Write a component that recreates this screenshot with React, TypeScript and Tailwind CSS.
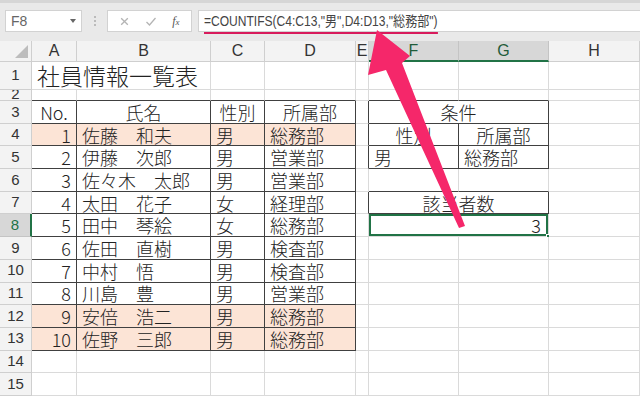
import React from "react"

const colLetters = ["A", "B", "C", "D", "E", "F", "G", "H"]

// rows 4..13 of the staff table
const staff: [string, string, string, string, boolean][] = [
  ["1", "佐藤　和夫", "男", "総務部", true],
  ["2", "伊藤　次郎", "男", "営業部", false],
  ["3", "佐々木　太郎", "男", "営業部", false],
  ["4", "太田　花子", "女", "経理部", false],
  ["5", "田中　琴絵", "女", "総務部", false],
  ["6", "佐田　直樹", "男", "検査部", false],
  ["7", "中村　悟", "男", "検査部", false],
  ["8", "川島　豊", "男", "営業部", false],
  ["9", "安倍　浩二", "男", "総務部", true],
  ["10", "佐野　三郎", "男", "総務部", true],
]

const dark = (r: number, c: number) =>
  (r >= 3 && r <= 13 && c >= 1 && c <= 4) ||
  (r >= 3 && r <= 5 && c >= 6 && c <= 7) ||
  (r === 7 && c >= 6 && c <= 7)

function borderClass(r: number, c: number, endCol = c) {
  const right = dark(r, endCol) || dark(r, endCol + 1)
  const bottom = dark(r, c) || dark(r + 1, c)
  if (right && bottom) return "border-r border-b border-r-[#404040] border-b-[#404040]"
  if (right) return "border-r border-b border-r-[#404040] border-b-[#dadada]"
  if (bottom) return "border-r border-b border-r-[#dadada] border-b-[#404040]"
  return "border-r border-b border-r-[#dadada] border-b-[#dadada]"
}

type CellDef = { text?: string; align?: string; span?: boolean; fill?: boolean; selected?: boolean; skip?: boolean; title?: boolean }

function cellAt(r: number, c: number): CellDef {
  if (r === 1 && c === 1) return { text: "社員情報一覧表", title: true }
  if (r === 3) {
    if (c === 1) return { text: "No.", align: "justify-center" }
    if (c === 2) return { text: "氏名", align: "justify-center" }
    if (c === 3) return { text: "性別", align: "justify-center" }
    if (c === 4) return { text: "所属部", align: "justify-center" }
    if (c === 6) return { text: "条件", align: "justify-center", span: true }
    if (c === 7) return { skip: true }
  }
  if (r >= 4 && r <= 13 && c >= 1 && c <= 4) {
    const p = staff[r - 4]
    if (c === 1) return { text: p[0], align: "justify-end pr-[5px]", fill: p[4] }
    return { text: p[c - 1], align: "justify-start pl-[5px]", fill: p[4] }
  }
  if (r === 4 && c === 6) return { text: "性別", align: "justify-center" }
  if (r === 4 && c === 7) return { text: "所属部", align: "justify-center" }
  if (r === 5 && c === 6) return { text: "男", align: "justify-start pl-[5px]" }
  if (r === 5 && c === 7) return { text: "総務部", align: "justify-start pl-[5px]" }
  if (r === 7 && c === 6) return { text: "該当者数", align: "justify-center", span: true }
  if (r === 7 && c === 7) return { skip: true }
  if (r === 8 && c === 6) return { text: "3", align: "justify-end pr-[7px]", span: true, selected: true }
  if (r === 8 && c === 7) return { skip: true }
  return {}
}

function FormulaBar() {
  return (
    <div className="h-[41px] bg-[#e9e9e9] border-t-[3px] border-[#d6d6d6] flex items-start pt-[7px] pl-[5px]">
      <div className="w-[77px] h-[22px] bg-white border border-[#d2d2d2] flex items-center justify-between px-[5px]">
        <span className="text-[14px] text-[#666] font-['Liberation_Sans',sans-serif]">F8</span>
        <span className="w-0 h-0 border-l-[3px] border-r-[3px] border-t-[4px] border-l-transparent border-r-transparent border-t-[#666]" />
      </div>
      <div className="w-[25px] h-[22px] flex flex-col items-center justify-center gap-[2px]">
        <span className="w-[2px] h-[2px] bg-[#bbb]" />
        <span className="w-[2px] h-[2px] bg-[#bbb]" />
        <span className="w-[2px] h-[2px] bg-[#bbb]" />
      </div>
      <div className="w-[85px] h-[22px] bg-white border border-[#d2d2d2] flex items-center justify-around px-[4px]">
        <svg width="11" height="11" viewBox="0 0 10 10" fill="none" stroke="#b4b4b4" strokeWidth="1.2">
          <path d="M2 2l6 6M8 2l-6 6" />
        </svg>
        <svg width="12" height="11" viewBox="0 0 12 10" fill="none" stroke="#b4b4b4" strokeWidth="1.3">
          <path d="M1.5 5.5l3 3L10.5 1.5" />
        </svg>
        <span className="text-[12px] italic text-[#555] font-['Liberation_Serif',serif]">
          f<span className="text-[9px]">x</span>
        </span>
      </div>
      <div className="flex-1 h-[22px] ml-[6px] bg-white border-y border-l border-[#d2d2d2] flex items-center pl-[5px]">
        <span className="relative inline-block origin-left scale-x-[0.86] whitespace-nowrap text-[14px] text-[#444] font-['Liberation_Sans','Noto_Sans_CJK_JP',sans-serif]">
          =COUNTIFS(C4:C13,"男",D4:D13,"総務部")
          <span className="absolute left-0 right-0 -bottom-[2px] h-[2px] bg-[#d81b5c]" />
        </span>
      </div>
    </div>
  )
}

export default function App() {
  const rows = Array.from({ length: 15 }, (_, i) => i + 1)
  return (
    <div className="relative w-[640px] h-[396px] overflow-hidden bg-white font-['Noto_Sans_CJK_JP',sans-serif]">
      <FormulaBar />
      <div className="grid grid-cols-[32px_45px_134px_54px_91px_13px_90px_90px_91px] grid-rows-[21px_28px_11px_repeat(13,22.7px)]">
        {/* select-all corner */}
        <div className="bg-[#f3f3f3] border-r border-b border-[#cfcfcf] flex items-end justify-end p-[3px]">
          <svg width="13" height="13" viewBox="0 0 13 13">
            <path d="M13 0V13H0Z" fill="#bdbdbd" />
          </svg>
        </div>
        {colLetters.map((l, i) => {
          const sel = i === 5 || i === 6
          return (
            <div
              key={l}
              className={
                sel
                  ? "bg-[#d7d7d7] border-r border-[#c4c4c4] border-b-2 border-b-[#217346] flex items-center justify-center text-[16px] text-[#1f5c3a] font-['Liberation_Sans',sans-serif]"
                  : "bg-[#f3f3f3] border-r border-b border-[#cfcfcf] flex items-center justify-center text-[16px] text-[#333] font-['Liberation_Sans',sans-serif]"
              }
            >
              {l}
            </div>
          )
        })}
        {rows.map((r) => (
          <React.Fragment key={r}>
            <div
              className={
                r === 8
                  ? "bg-[#d7d7d7] border-r-2 border-r-[#217346] border-b border-b-[#c4c4c4] flex items-center justify-center overflow-hidden text-[15px] text-[#217346] font-['Liberation_Sans',sans-serif]"
                  : r === 2
                  ? "bg-[#f3f3f3] border-r border-b border-[#cfcfcf] flex items-end justify-center overflow-hidden text-[15px] leading-[12px] text-[#333] font-['Liberation_Sans',sans-serif]"
                  : "bg-[#f3f3f3] border-r border-b border-[#cfcfcf] flex items-center justify-center overflow-hidden text-[15px] text-[#333] font-['Liberation_Sans',sans-serif]"
              }
            >
              {r}
            </div>
            {colLetters.map((_, ci) => {
              const c = ci + 1
              const def = cellAt(r, c)
              if (def.skip) return null
              const border = borderClass(r, c, def.span ? c + 1 : c)
              if (def.title) {
                return (
                  <div key={c} className="border-b border-b-[#dadada] flex items-center pl-[5px] whitespace-nowrap z-10 text-[23px] font-light text-[#222] leading-none">
                    {def.text}
                  </div>
                )
              }
              return (
                <div
                  key={c}
                  className={[
                    "relative flex items-center whitespace-nowrap text-[18px] font-light leading-none text-[#222]",
                    def.span ? "col-span-2" : "",
                    def.fill ? "bg-[#fce4d6]" : "bg-white",
                    def.align ?? "",
                    border,
                    def.selected ? "shadow-[inset_0_0_0_2px_#217346]" : "",
                  ].join(" ")}
                >
                  {def.text}
                  {def.selected && (
                    <span className="absolute -right-[3px] -bottom-[3px] w-[5px] h-[5px] bg-[#217346] border border-white" />
                  )}
                </div>
              )
            })}
          </React.Fragment>
        ))}
      </div>
      {/* pink arrow pointing at the formula */}
      <svg className="absolute inset-0 pointer-events-none" width="640" height="396" viewBox="0 0 640 396">
        <polygon points="377,30 410,56 402,63 465,226 459,228 386,70 368,75" fill="#f5276a" />
      </svg>
    </div>
  )
}
